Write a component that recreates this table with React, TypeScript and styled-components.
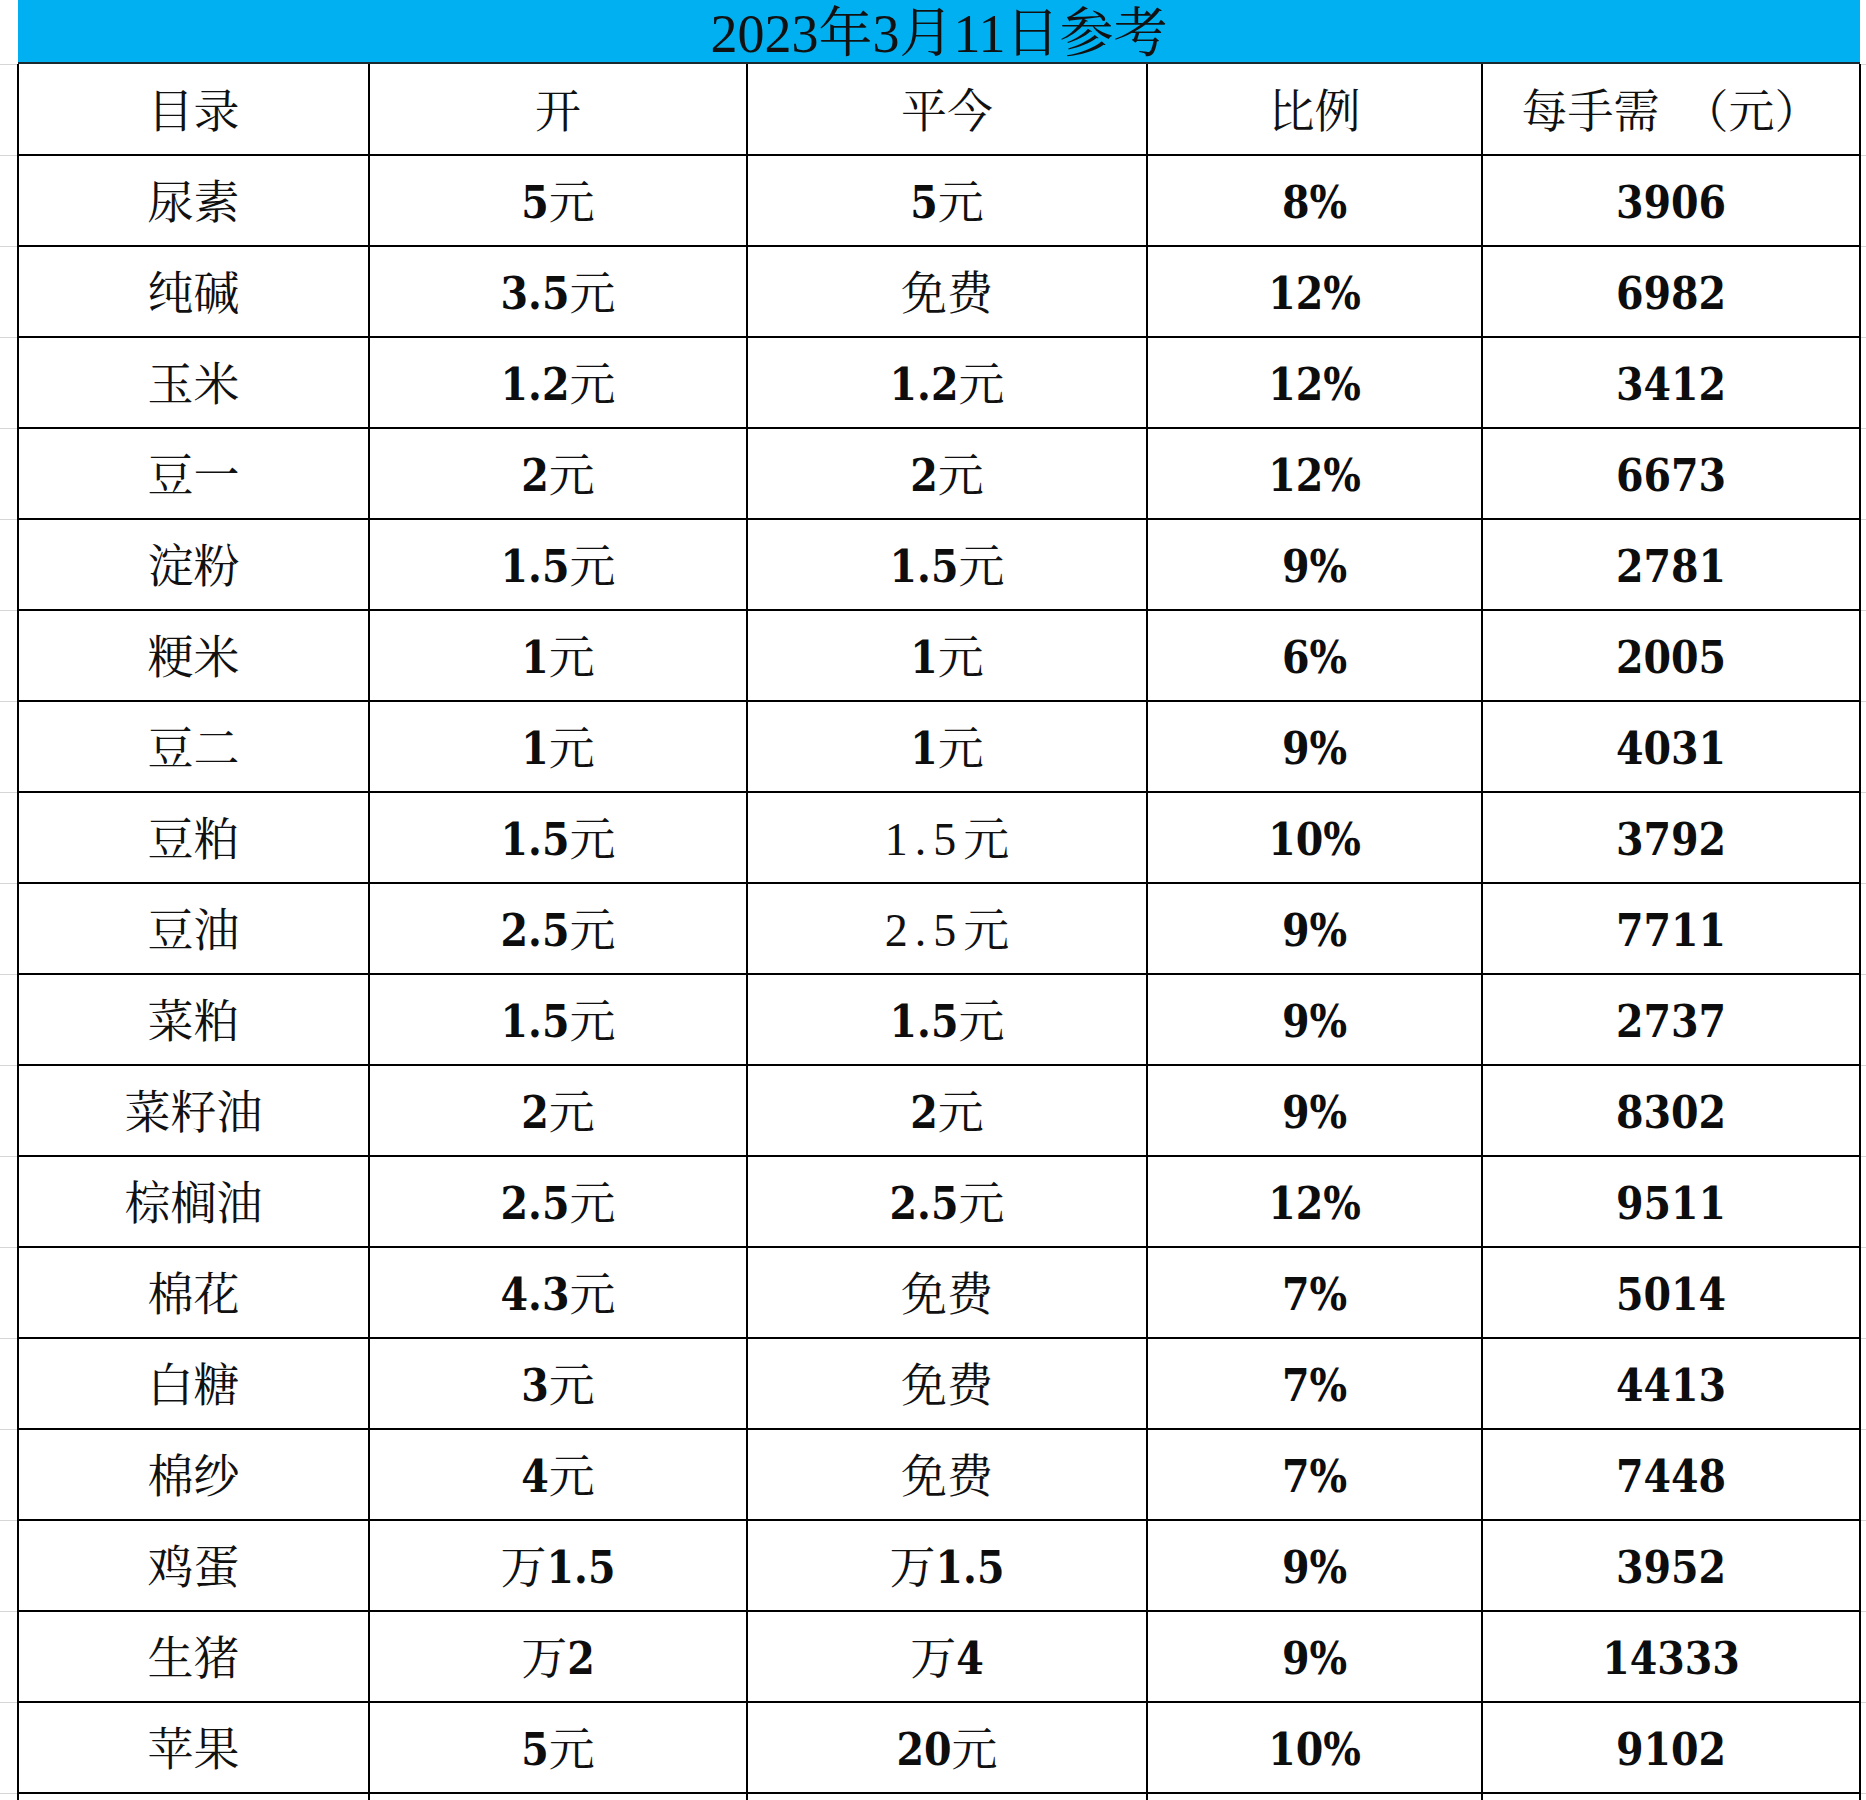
import React from "react";
import styled, { createGlobalStyle } from "styled-components";

const GlobalStyle = createGlobalStyle`
  html, body {
    margin: 0;
    padding: 0;
    background: #ffffff;
  }
`;

const CJK = `"Liberation Serif", "Noto Serif CJK SC", "Noto Sans CJK SC", serif`;

type Row = {
  name: string;
  open: string;
  close: string;
  plainClose?: boolean;
  ratio: string;
  margin: string;
};

const rows: Row[] = [
  { name: "尿素", open: "5元", close: "5元", ratio: "8%", margin: "3906" },
  { name: "纯碱", open: "3.5元", close: "免费", ratio: "12%", margin: "6982" },
  { name: "玉米", open: "1.2元", close: "1.2元", ratio: "12%", margin: "3412" },
  { name: "豆一", open: "2元", close: "2元", ratio: "12%", margin: "6673" },
  { name: "淀粉", open: "1.5元", close: "1.5元", ratio: "9%", margin: "2781" },
  { name: "粳米", open: "1元", close: "1元", ratio: "6%", margin: "2005" },
  { name: "豆二", open: "1元", close: "1元", ratio: "9%", margin: "4031" },
  { name: "豆粕", open: "1.5元", close: "1.5元", plainClose: true, ratio: "10%", margin: "3792" },
  { name: "豆油", open: "2.5元", close: "2.5元", plainClose: true, ratio: "9%", margin: "7711" },
  { name: "菜粕", open: "1.5元", close: "1.5元", ratio: "9%", margin: "2737" },
  { name: "菜籽油", open: "2元", close: "2元", ratio: "9%", margin: "8302" },
  { name: "棕榈油", open: "2.5元", close: "2.5元", ratio: "12%", margin: "9511" },
  { name: "棉花", open: "4.3元", close: "免费", ratio: "7%", margin: "5014" },
  { name: "白糖", open: "3元", close: "免费", ratio: "7%", margin: "4413" },
  { name: "棉纱", open: "4元", close: "免费", ratio: "7%", margin: "7448" },
  { name: "鸡蛋", open: "万1.5", close: "万1.5", ratio: "9%", margin: "3952" },
  { name: "生猪", open: "万2", close: "万4", ratio: "9%", margin: "14333" },
  { name: "苹果", open: "5元", close: "20元", ratio: "10%", margin: "9102" },
];

const Sheet = styled.div`
  width: 1866px;
  height: 1800px;
  overflow: hidden;
  padding-left: 17px;
  box-sizing: border-box;
  background-image: repeating-linear-gradient(
    to bottom,
    #d6d6d6 0 1px,
    transparent 1px 91px
  );
  background-position: 0 64px;
`;

const Table = styled.div`
  width: 1844px;
`;

const TitleBar = styled.div`
  height: 64px;
  background: #00b0f0;
  border-bottom: 2px solid #1c2a30;
  margin-left: 1px;
  margin-right: 1px;
  display: flex;
  align-items: center;
  justify-content: center;
  font-family: ${CJK};
  font-size: 54px;
  line-height: 1;
  color: #111111;
  padding-top: 5px;
  box-sizing: border-box;
`;

const Grid = styled.div`
  display: grid;
  grid-template-columns: 349px 376px 398px 333px 376px;
  grid-template-rows: 90px;
  grid-auto-rows: 89px;
  gap: 2px;
  padding: 0 2px 2px 2px;
  background: #000000;
`;

const Cell = styled.div`
  background: #ffffff;
  display: flex;
  align-items: center;
  justify-content: center;
  padding-top: 4px;
  box-sizing: border-box;
  font-family: ${CJK};
  font-size: 46px;
  line-height: 1;
  color: #111111;
  white-space: pre;
`;

const HeadCell = styled(Cell)`
  padding-top: 6px;
`;

const Num = styled.span`
  font-family: "DejaVu Serif Condensed", "DejaVu Serif", serif;
  font-stretch: condensed;
  font-weight: 700;
  font-size: 44px;
  color: #0d0d0d;
`;

const PlainNum = styled.span`
  font-family: "Liberation Serif", serif;
  font-size: 46px;
  letter-spacing: 7px;
  color: #111111;
`;

const Unit = styled.span`
  font-family: ${CJK};
  font-weight: 400;
`;

function Value({ text, plain }: { text: string; plain?: boolean }) {
  const parts = text.match(/[0-9.%]+|[^0-9.%]+/g) ?? [];
  return (
    <>
      {parts.map((part, i) =>
        /[0-9.%]/.test(part) ? (
          plain ? (
            <PlainNum key={i}>{part}</PlainNum>
          ) : (
            <Num key={i}>{part}</Num>
          )
        ) : (
          <Unit key={i}>{part}</Unit>
        )
      )}
    </>
  );
}

export default function App() {
  return (
    <>
      <GlobalStyle />
      <Sheet>
        <Table>
          <TitleBar>2023年3月11日参考</TitleBar>
          <Grid>
            <HeadCell>目录</HeadCell>
            <HeadCell>开</HeadCell>
            <HeadCell>平今</HeadCell>
            <HeadCell>比例</HeadCell>
            <HeadCell>{"每手需  （元）"}</HeadCell>
            {rows.map((r) => (
              <React.Fragment key={r.name}>
                <Cell>{r.name}</Cell>
                <Cell>
                  <Value text={r.open} />
                </Cell>
                <Cell>
                  <Value text={r.close} plain={r.plainClose} />
                </Cell>
                <Cell>
                  <Value text={r.ratio} />
                </Cell>
                <Cell>
                  <Value text={r.margin} />
                </Cell>
              </React.Fragment>
            ))}
            <Cell />
            <Cell />
            <Cell />
            <Cell />
            <Cell />
          </Grid>
        </Table>
      </Sheet>
    </>
  );
}
